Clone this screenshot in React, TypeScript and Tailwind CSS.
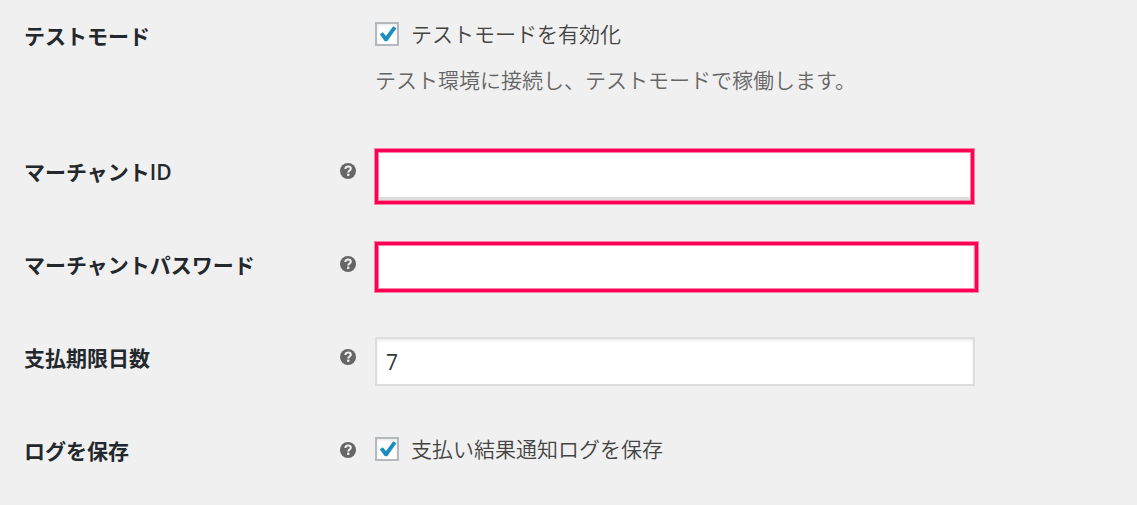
import type { InputHTMLAttributes, ReactNode } from "react";
import clsx from "clsx";

export default function App() {
  return (
    <main className="min-h-screen bg-[#f0f0f0] font-['Open_Sans','Noto_Sans_CJK_JP',sans-serif] text-[21px] leading-7 text-[#444]">
      <form>
        <SettingRow id="test-mode" label="テストモード" help={false} className="h-[126px] pt-5">
          <CheckField id="test-mode" text="テストモードを有効化" />
          <p className="mt-[18px] font-[350] text-[#666]">テスト環境に接続し、テストモードで稼働します。</p>
        </SettingRow>
        <SettingRow id="merchant-id" label="マーチャントID" className="h-[93px] pt-[30px]">
          <TextField
            id="merchant-id"
            className="-mt-[7px] h-[55px] max-w-[599px] border-3 border-[#ff0052] shadow-[0_0_0_1px_#f881a8,inset_0_0_0_1px_#f881a8,inset_0_-4px_0_#dddddd]"
          />
        </SettingRow>
        <SettingRow id="merchant-password" label="マーチャントパスワード" className="h-[93px] pt-[30px]">
          <TextField
            id="merchant-password"
            type="password"
            className="-mt-[7px] h-[50px] max-w-[603px] border-3 border-[#ff0052] shadow-[0_0_0_1px_#f881a8,inset_0_0_0_1px_#f881a8,inset_-2px_0_0_#dddddd]"
          />
        </SettingRow>
        <SettingRow id="payment-days" label="支払期限日数" className="h-[93px] pt-[30px]">
          <TextField
            id="payment-days"
            defaultValue="7"
            className="-mt-[5px] h-[49px] max-w-[600px] border-2 border-[#ddd] shadow-[inset_0_2px_3px_rgba(0,0,0,0.07)]"
          />
        </SettingRow>
        <SettingRow id="save-log" label="ログを保存" className="h-[93px] pt-[30px]">
          <CheckField id="save-log" text="支払い結果通知ログを保存" />
        </SettingRow>
      </form>
    </main>
  );
}

type RowProps = {
  id: string;
  label: string;
  help?: boolean;
  className?: string;
  children: ReactNode;
};

function SettingRow({ id, label, help = true, className, children }: RowProps) {
  return (
    <div className={clsx("flex gap-[19px] px-6", className)}>
      <div className="flex h-[30px] w-[332px] shrink-0 items-center justify-between">
        <label htmlFor={id} className="pt-0.5 font-semibold text-[#23282d]">
          {label}
        </label>
        {help && <HelpIcon />}
      </div>
      <div className="min-w-0 flex-1">{children}</div>
    </div>
  );
}

function TextField({ className, type = "text", ...rest }: InputHTMLAttributes<HTMLInputElement>) {
  return (
    <input
      type={type}
      className={clsx("block w-full bg-white px-[9px] text-[#32373c] outline-none", className)}
      {...rest}
    />
  );
}

function CheckField({ id, text }: { id: string; text: string }) {
  return (
    <div className="flex h-7 items-center gap-3">
      <span className="relative size-6 shrink-0">
        <input
          id={id}
          type="checkbox"
          defaultChecked
          className="peer block size-6 appearance-none border-2 border-[#b4b9be] bg-white shadow-[inset_0_1px_3px_rgba(0,0,0,0.1)]"
        />
        <svg
          viewBox="0 0 24 24"
          className="pointer-events-none absolute inset-0 hidden size-6 peer-checked:block"
          aria-hidden="true"
        >
          <path d="M4.8 12.3 7.8 10.3 11 14 18.2 4.2 21.4 6.2 12.8 18.4Q11 20.2 9.2 18.4Z" fill="#1e8cbe" />
        </svg>
      </span>
      <label htmlFor={id} className="font-[350]">
        {text}
      </label>
    </div>
  );
}

function HelpIcon() {
  return (
    <svg viewBox="0 0 16 16" className="size-4" aria-hidden="true">
      <circle cx="8" cy="8" r="8" fill="#666" />
      <path
        d="M5.4 5.9C5.4 4.3 6.6 3.5 8.1 3.5s2.7.8 2.7 2.2c0 1.8-2.5 1.9-2.5 3.8"
        fill="none"
        stroke="#f0f0f0"
        strokeWidth="2.1"
      />
      <rect x="7.1" y="10.6" width="2.3" height="2.3" fill="#f0f0f0" />
    </svg>
  );
}
